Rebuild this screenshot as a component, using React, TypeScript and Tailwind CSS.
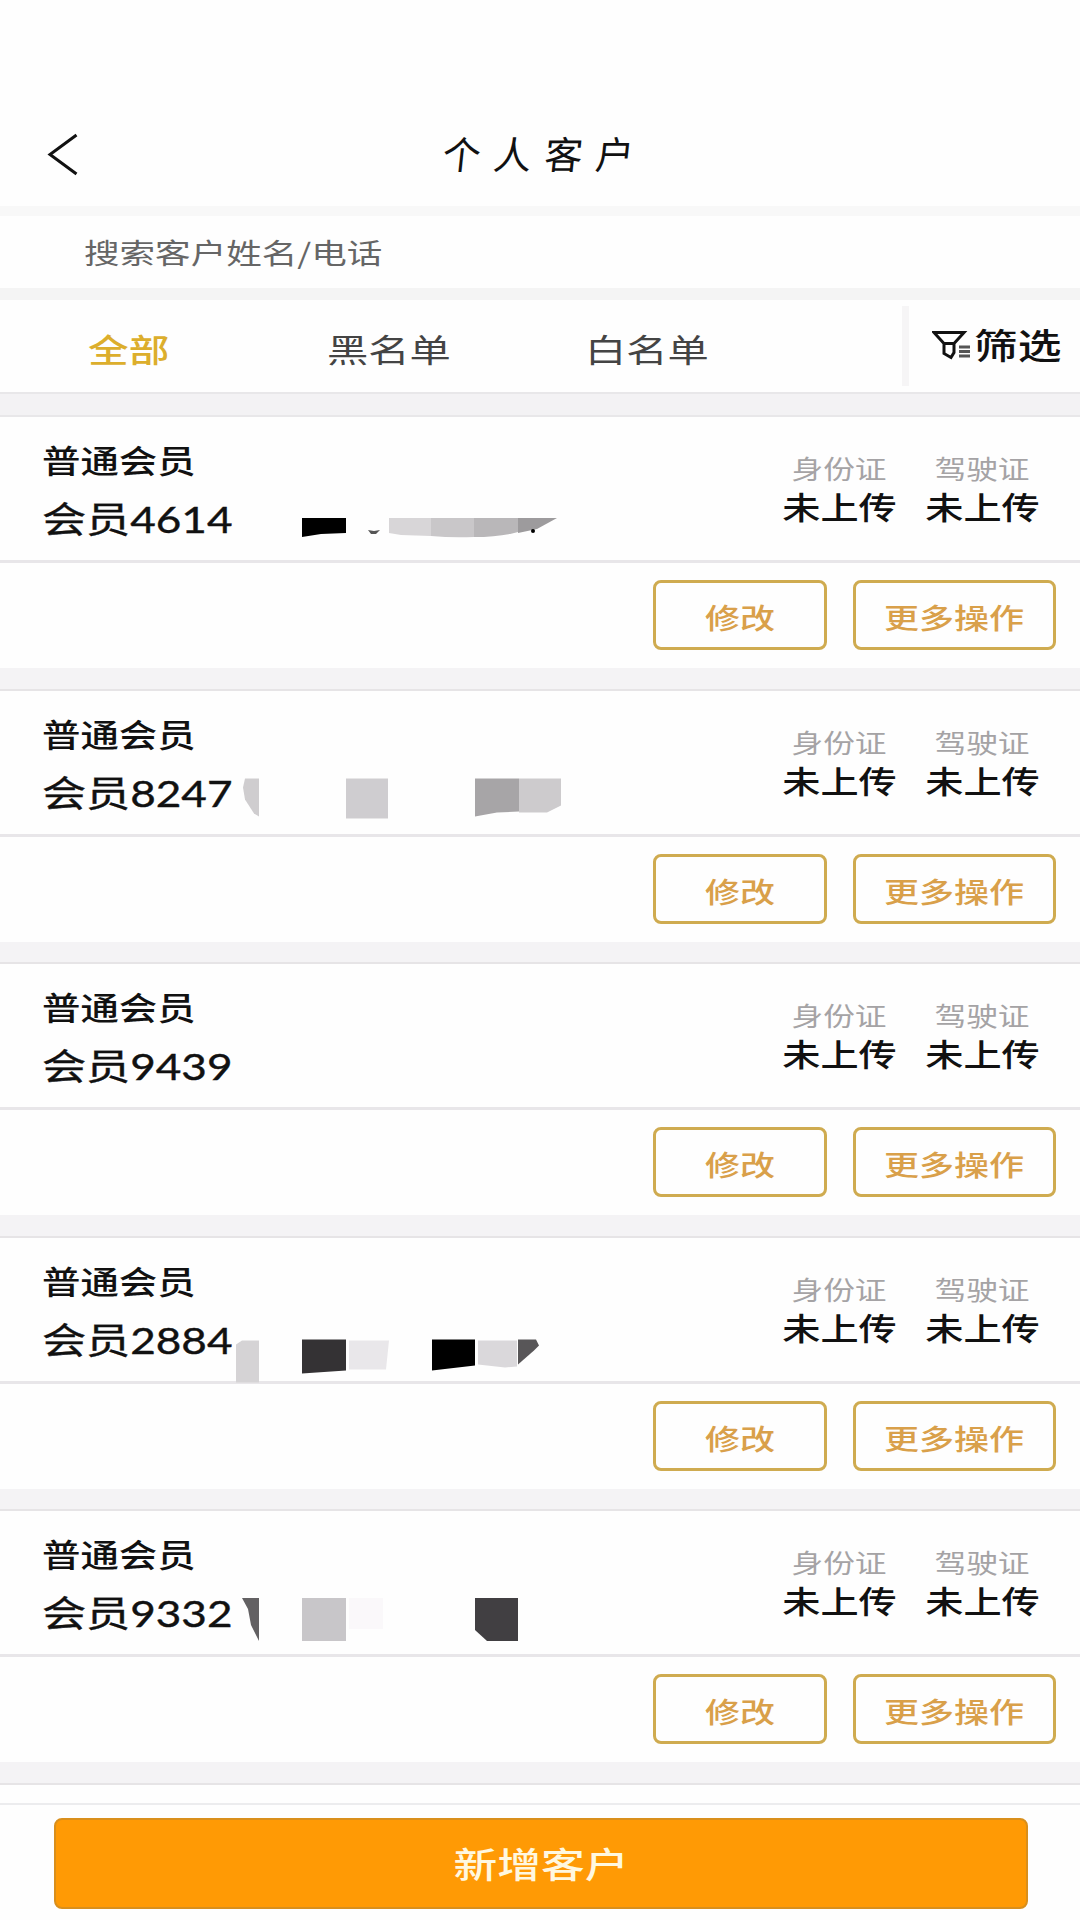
import React from 'react';

type Member = { id: string; masks: React.ReactNode };

const members: Member[] = [
  {
    id: '4614',
    masks: (
      <>
        <path d="M302 518h44v15l-25 1-19 3z" fill="#000" />
        <path d="M368 530l6 1 6-1-4 4h-5z" fill="#555" />
        <path d="M389 518h42v18l-30-1-12-2z" fill="#d8d6d8" />
        <path d="M431 518h43v19q-22 1-43-1z" fill="#c9c7c9" />
        <path d="M474 518h44v14q-18 5-44 5z" fill="#b9b7b9" />
        <path d="M518 518h39l-20 11-19 4z" fill="#9d9b9d" />
        <circle cx="533" cy="531" r="2" fill="#000" />
      </>
    ),
  },
  {
    id: '8247',
    masks: (
      <>
        <path d="M245 778h14v38l-5-3-9-14-2-12z" fill="#cfcdcf" />
        <path d="M346 778h42v40h-42z" fill="#cfcdd0" />
        <path d="M475 778h44v33l-22 1-22 4z" fill="#a7a5a7" />
        <path d="M519 778h42v27l-14 7h-28z" fill="#cdcbcd" />
      </>
    ),
  },
  { id: '9439', masks: null },
  {
    id: '2884',
    masks: (
      <>
        <path d="M236 1344l6-4h17v42h-23z" fill="#d5d3d5" />
        <path d="M302 1339h44v31l-44 3z" fill="#343234" />
        <path d="M349 1340h40l-3 29h-37z" fill="#e9e7ea" />
        <path d="M432 1339h43v26l-43 5z" fill="#000" />
        <path d="M478 1340h39v26l-12 1-27-3z" fill="#dad8db" />
        <path d="M518 1339h18l3 6-5 5-16 14z" fill="#585658" />
      </>
    ),
  },
  {
    id: '9332',
    masks: (
      <>
        <path d="M242 1598h17v43l-8-16-3-16z" fill="#636163" />
        <path d="M302 1598h44v43h-44z" fill="#c8c6c9" />
        <path d="M349 1598h34v31h-34z" fill="#faf8fa" />
        <path d="M475 1598h43v43h-31l-12-11z" fill="#413f42" />
      </>
    ),
  },
];

function Wide({ className, children }: { className: string; children: React.ReactNode }) {
  return <span className={`block whitespace-nowrap leading-none ${className}`}>{children}</span>;
}

function License({ label }: { label: string }) {
  return (
    <div className="flex w-[117px] flex-col items-center">
      <Wide className="scale-x-[1.22] text-[26px] text-[#a5a3a5]">{label}</Wide>
      <Wide className="mt-[9px] scale-x-[1.23] text-[31px] font-medium text-[#111]">未上传</Wide>
    </div>
  );
}

function MemberCard({ member, top }: { member: Member; top: number }) {
  return (
    <section className="relative h-[273.5px]">
      <div className="flex h-[143px] justify-between pr-[39px] pl-[42px]">
        <div className="pt-[26px]">
          <Wide className="origin-left scale-x-[1.2] text-[32px] font-medium text-[#111]">普通会员</Wide>
          <Wide className="mt-[26px] origin-left scale-x-[1.225] font-[Lato,'Noto_Sans_CJK_SC',sans-serif] text-[36px] text-[#111] [-webkit-text-stroke:0.4px_#111]">
            会员{member.id}
          </Wide>
        </div>
        <div className="flex gap-[26px] pt-[38px]">
          <License label="身份证" />
          <License label="驾驶证" />
        </div>
      </div>
      <div className="h-[3px] bg-[#e8e6e9]" />
      <div className="flex h-[105px] justify-end gap-[26px] pt-[17px] pr-[24px]">
        <button className="flex h-[70px] w-[174px] items-center justify-center rounded-[8px] border-[3px] border-[#cfab50]">
          <Wide className="relative top-[2px] scale-x-[1.25] text-[28px] font-medium text-[#d9a04a]">修改</Wide>
        </button>
        <button className="flex h-[70px] w-[203px] items-center justify-center rounded-[8px] border-[3px] border-[#cfab50]">
          <Wide className="relative top-[2px] scale-x-[1.25] text-[28px] font-medium text-[#d9a04a]">更多操作</Wide>
        </button>
      </div>
      <div className="h-[22.5px] border-b-2 border-[#e6e4e6] bg-[#f4f3f5]" />
      <svg className="absolute top-0 left-[200px] h-[170px] w-[400px]" viewBox={`200 ${top} 400 170`}>
        {member.masks}
      </svg>
    </section>
  );
}

export default function App() {
  return (
    <div className="flex h-[1920px] w-[1080px] flex-col overflow-hidden bg-[#fefefe] font-['Noto_Sans_CJK_SC',sans-serif]">
      <header className="flex h-[206px] items-start pl-[47px]">
        <svg className="mt-[133px] h-[43px] w-[31px]" viewBox="0 0 31 43" fill="none" stroke="#111" strokeWidth="3">
          <path d="M29.500 2L3 21.500L29.500 41" />
        </svg>
        <h1 className="mt-[134px] ml-[365px] text-[38px] leading-none tracking-[13px] whitespace-nowrap text-[#111]">
          <span className="block -skew-x-6">个人客户</span>
        </h1>
      </header>
      <div className="h-[10px] bg-[#f8f8f8]" />
      <div className="flex h-[72px] items-center pl-[84px]">
        <Wide className="origin-left scale-x-[1.27] text-[28px] text-[#666]">搜索客户姓名/电话</Wide>
      </div>
      <div className="h-[12px] bg-[#f4f4f4]" />
      <nav className="flex h-[92px]">
        <div className="w-[240px] pt-[32px] pl-[88px]">
          <Wide className="origin-left scale-x-[1.27] text-[32px] font-medium text-[#dcae2c]">全部</Wide>
        </div>
        <div className="w-[260px] pt-[32px] pl-[87px]">
          <Wide className="origin-left scale-x-[1.29] text-[32px] text-[#444]">黑名单</Wide>
        </div>
        <div className="w-[402px] pt-[32px] pl-[85px]">
          <Wide className="origin-left scale-x-[1.29] text-[32px] text-[#444]">白名单</Wide>
        </div>
        <div className="mt-[6px] h-[80px] w-[7px] bg-[#f6f5f6]" />
        <div className="flex pt-[26px] pl-[23px]">
          <svg className="mt-[5px] h-[30px] w-[42px]" viewBox="0 0 42 30" fill="none" stroke="#111" strokeWidth="3">
            <path d="M2 1.500h30L22 12.500v9l-3 5-7-4V12.500z" />
            <path d="M12 12.500h10" />
            <path d="M27 16h11M27 20.500h11M27 25h11" stroke="#555" />
          </svg>
          <Wide className="origin-left scale-x-[1.25] text-[35px] font-medium text-[#111]">筛选</Wide>
        </div>
      </nav>
      <div className="h-[25px] border-y-2 border-[#e8e7e9] bg-[#f3f2f4]" />
      <main>
        {members.map((member, i) => (
          <MemberCard key={member.id} member={member} top={417 + i * 273.5} />
        ))}
      </main>
      <footer className="flex grow flex-col pt-[18px]">
        <div className="h-[2px] bg-[#ececee]" />
        <button className="mt-[13px] ml-[54px] flex h-[91px] w-[974px] items-center justify-center rounded-[8px] border-2 border-[#d98f1c] bg-[#ff9a05]">
          <Wide className="relative -top-px scale-x-[1.25] text-[35px] font-medium text-[#fff8e0]">新增客户</Wide>
        </button>
      </footer>
    </div>
  );
}
